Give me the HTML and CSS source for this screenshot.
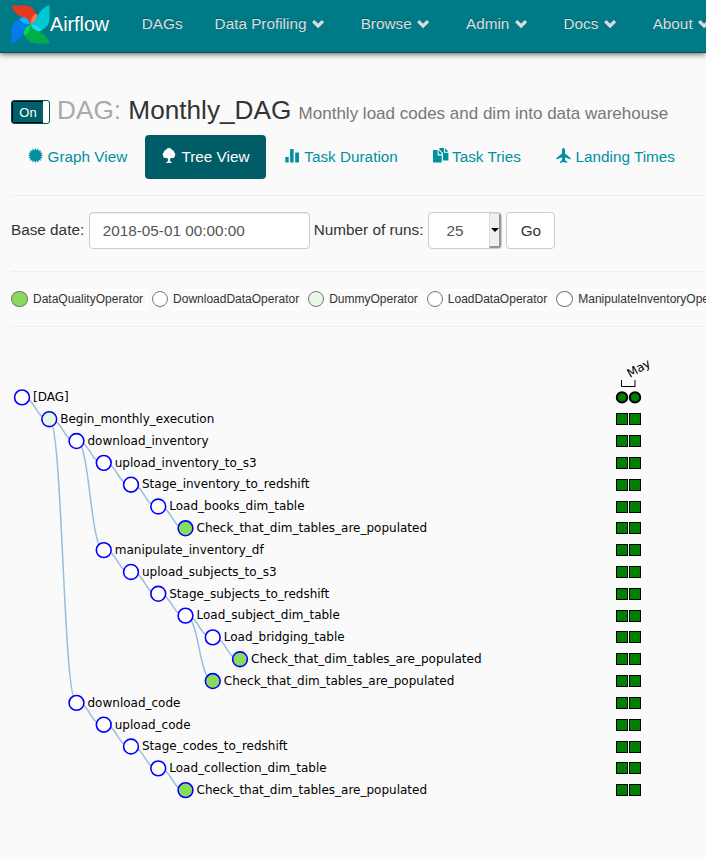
FILE: index.html
```
<!DOCTYPE html>
<html lang="en">
<head>
<meta charset="utf-8">
<title>Airflow - Monthly_DAG</title>
<link rel="stylesheet" href="styles.css">
</head>
<body>
<header class="navbar">
  <a class="brand"><svg class="logo" viewBox="-58 -58 116 116">
    <g><path fill="#e43921" d="M-58-57C-32-53-4-66 12-41L19-30C8-29 3-22 0 0C-6-24-42-14-58-57Z"/><path fill="#ff7557" d="M18-32C25-18 22-9 0 0C1-18 6-29 18-32Z"/></g>
    <g transform="rotate(90)"><path fill="#00c7d4" d="M-58-57C-32-53-4-66 12-41L19-30C8-29 3-22 0 0C-6-24-42-14-58-57Z"/><path fill="#11e1ee" d="M18-32C25-18 22-9 0 0C1-18 6-29 18-32Z"/></g>
    <g transform="rotate(180)"><path fill="#00ad46" d="M-58-57C-32-53-4-66 12-41L19-30C8-29 3-22 0 0C-6-24-42-14-58-57Z"/><path fill="#04d659" d="M18-32C25-18 22-9 0 0C1-18 6-29 18-32Z"/></g>
    <g transform="rotate(270)"><path fill="#017cee" d="M-58-57C-32-53-4-66 12-41L19-30C8-29 3-22 0 0C-6-24-42-14-58-57Z"/><path fill="#0cb6ff" d="M18-32C25-18 22-9 0 0C1-18 6-29 18-32Z"/></g>
  </svg><span>Airflow</span></a>
  <nav class="menu">
    <a>DAGs</a>
    <a>Data Profiling <svg class="chev" viewBox="0 0 15 15"><path d="M2.2 5.2L7.1 10L12 5.2"/></svg></a>
    <a>Browse <svg class="chev" viewBox="0 0 15 15"><path d="M2.2 5.2L7.1 10L12 5.2"/></svg></a>
    <a>Admin <svg class="chev" viewBox="0 0 15 15"><path d="M2.2 5.2L7.1 10L12 5.2"/></svg></a>
    <a>Docs <svg class="chev" viewBox="0 0 15 15"><path d="M2.2 5.2L7.1 10L12 5.2"/></svg></a>
    <a>About <svg class="chev" viewBox="0 0 15 15"><path d="M2.2 5.2L7.1 10L12 5.2"/></svg></a>
  </nav>
</header>
<main class="container">
  <div class="title">
    <span class="toggle"><span class="toggle-on">On</span><span class="toggle-handle"></span></span>
    <h3><span class="muted">DAG:</span> <span class="name">Monthly_DAG</span> <small>Monthly load codes and dim into data warehouse</small></h3>
  </div>
  <nav class="pills">
    <a><svg class="icon" viewBox="0 0 15 15"><path d="M7.5 0L8.6 2.2L10.4.6L10.7 3L13 2.2L12.3 4.5L14.6 4.7L13 6.4L15 7.5L13 8.6L14.6 10.3L12.3 10.5L13 12.8L10.7 12L10.4 14.4L8.6 12.8L7.5 15L6.4 12.8L4.6 14.4L4.3 12L2 12.8L2.7 10.5L.4 10.3L2 8.6L0 7.5L2 6.4L.4 4.7L2.7 4.5L2 2.2L4.3 3L4.6.6L6.4 2.2Z"/></svg> Graph View</a>
    <a class="active"><svg class="icon" viewBox="0 0 15 15"><path d="M7 0C8.5 0 9.7.8 10 2C11.4 2.1 12.4 3.3 12.1 4.6C13.4 5.2 13.6 6.6 12.8 7.7C13 9.3 11.4 10.5 9.8 9.8L8.1 10.7V13.5L9.6 14V15H4.4V14L5.9 13.5V10.7L4.2 9.8C2.6 10.5 1 9.3 1.2 7.7C.4 6.6.6 5.2 1.9 4.6C1.6 3.3 2.6 2.1 4 2C4.3.8 5.5 0 7 0Z"/></svg> Tree View</a>
    <a><svg class="icon" viewBox="0 0 15 15"><path d="M.3 9H3.7V14.5H.3ZM5.1 1.5Q5.1 1 5.6 1H8.1Q8.6 1 8.6 1.5V14.5H5.1ZM10.2 5Q10.2 4.5 10.7 4.5H13.5Q14 4.5 14 5V14.5H10.2Z"/></svg> Task Duration</a>
    <a><svg class="icon" viewBox="0 0 15 15"><path d="M0 2H4.6V7.4H8.7V14.6H0ZM5.6 2L9 5.4V6.3H5.6ZM6.4 0H11V4.8H15.4V12.5H10V5L6.4 1.4ZM12 0L15.4 3.8H12Z"/></svg> Task Tries</a>
    <a><svg class="icon" viewBox="0 0 15 15"><path d="M7.5 0C8.5 0 9 1.3 9 2.5V5.6L14.5 10V11.6L9 9.3V12L11.2 14V15L7.5 14.1L3.8 15V14L6 12V9.3L.5 11.6V10L6 5.6V2.5C6 1.3 6.5 0 7.5 0Z"/></svg> Landing Times</a>
  </nav>
  <form class="filters">
    <label>Base date:</label>
    <input class="date" type="text" value="2018-05-01 00:00:00">
    <label>Number of runs:</label>
    <span class="select"><span class="value">25</span><span class="drop"></span></span>
    <button class="go" type="button">Go</button>
  </form>
  <div class="legend">
    <div class="op"><i class="dot quality"></i><span>DataQualityOperator</span></div>
    <div class="op"><i class="dot"></i><span>DownloadDataOperator</span></div>
    <div class="op"><i class="dot dummy"></i><span>DummyOperator</span></div>
    <div class="op"><i class="dot"></i><span>LoadDataOperator</span></div>
    <div class="op"><i class="dot last"></i><span>ManipulateInventoryOperator</span></div>
  </div>
  <svg id="tree" class="tree" width="695" height="500"></svg>
</main>
<script src="tree.js"></script>
</body>
</html>
```
FILE: styles.css
```
* { box-sizing: border-box; }
body {
  margin: 0;
  background: #fafafa;
  color: #333;
  font: 15.3px/21px "Liberation Sans", Arial, sans-serif;
  overflow: hidden;
}
.navbar {
  display: flex;
  height: 53px;
  padding-left: 11px;
  background: #007a87;
  border-bottom: 1px solid #004f57;
  box-shadow: 0 1px 6px rgba(0, 0, 0, .65);
  white-space: nowrap;
  color: #dcdcdc;
}
.brand {
  display: flex;
  width: 114.8px;
  flex: none;
  padding-top: 5px;
  color: #fff;
  font-size: 19.7px;
  line-height: 38px;
  text-shadow: 0 -1px 0 rgba(0, 0, 0, .25);
}
.logo { width: 39px; height: 39px; flex: none; }
.menu { display: flex; padding-top: 13px; text-shadow: 0 -1px 0 rgba(0, 0, 0, .25); }
.menu a { padding: 0 16px; flex: none; }
.chev { width: 15px; height: 15px; margin-right: 3px; vertical-align: -2px; }
.chev path { fill: none; stroke: #dcdcdc; stroke-width: 3.2; }
.container { padding-left: 11px; }
.title { display: flex; height: 82px; padding-top: 41px; }
.toggle {
  display: flex;
  width: 39px;
  height: 24px;
  margin-top: 6px;
  border: 1px solid #004f57;
  border-radius: 3px;
  background: #fff;
  overflow: hidden;
}
.toggle-on {
  width: 31px;
  background: #005f69;
  border: 1px solid #000;
  border-right: 0;
  color: #fff;
  font-size: 13px;
  line-height: 22px;
  text-align: center;
}
h3 { margin: 0 0 0 7px; font-size: 26.2px; line-height: 32px; font-weight: 400; white-space: nowrap; }
.muted { color: #aaa; }
small { font-size: 17px; color: #777; }
.pills { display: flex; gap: 2px; height: 44px; white-space: nowrap; }
.pills a { padding: 11px 16px 11px 17px; border-radius: 4px; color: #0090a0; }
.pills .active { padding-right: 16.5px; background: #005c66; color: #fff; }
.icon { width: 15px; height: 15px; margin-right: .3px; fill: currentColor; vertical-align: -1px; overflow: visible; }
.filters {
  display: flex;
  gap: 4px;
  height: 77px;
  margin-top: 16px;
  padding-top: 16px;
  border-top: 1px solid #eee;
  border-bottom: 1px solid #eee;
  line-height: 36px;
  white-space: nowrap;
}
.date {
  width: 221px;
  height: 37px;
  margin-left: .6px;
  padding: 0 13px;
  border: 1px solid #ccc;
  border-radius: 4px;
  background: #fff;
  box-shadow: inset 0 1px 1px rgba(0, 0, 0, .075);
  color: #555;
  font: inherit;
}
.select {
  display: flex;
  justify-content: space-between;
  width: 74px;
  height: 37px;
  margin-left: 1px;
  border: 1px solid #ccc;
  border-radius: 4px;
  background: #fff;
  color: #555;
  overflow: hidden;
}
.value { padding-left: 17px; }
.drop {
  display: flex;
  align-items: center;
  justify-content: center;
  width: 12px;
  background: #f0f0ee;
  border: solid #dcdad5;
  border-width: 1px 2px 2px 1px;
  border-right-color: #999590;
  border-bottom-color: #999590;
}
.drop::before { content: ""; border: solid transparent; border-width: 4px 4px 0; border-top-color: #000; }
.go {
  width: 49px;
  height: 37px;
  padding: 0;
  border: 1px solid #ccc;
  border-radius: 4px;
  background: #fff;
  color: #333;
  font: inherit;
}
.legend {
  display: flex;
  gap: 4px;
  height: 55px;
  padding-top: 17px;
  border-bottom: 1px solid #eee;
  font-size: 12px;
  line-height: 17px;
  white-space: nowrap;
}
.op { display: flex; flex: none; }
.dot { width: 16px; height: 16px; margin-top: 2px; border: 1px solid #777; border-radius: 50%; background: #fff; }
.quality, .last { width: 17px; }
.quality { background: #8adb5a; }
.dummy { background: #e8f7e4; }
.op span { height: 21px; padding: 0 3px; border: 2px solid #fff; border-radius: 5px; }
.tree { display: block; margin-top: 23px; font: 12px "DejaVu Sans", sans-serif; }
.link { fill: none; stroke: #95bfdf; stroke-width: 1.5; }
.node { fill: #fff; stroke: #00f; stroke-width: 1.6; }
.node.quality { fill: #8adb5a; }
.node.dummy { fill: #e8f7e4; }
.run { fill: green; stroke: #000; stroke-width: 2; }
.task { fill: green; stroke: #000; stroke-width: 1; }
.axis { fill: none; stroke: #000; }
```
FILE: tree.js
```
// Each row: label, depth, parent row index, operator class
const rows = [
  ["[DAG]", 0, null, ""],
  ["Begin_monthly_execution", 1, 0, "dummy"],
  ["download_inventory", 2, 1, ""],
  ["upload_inventory_to_s3", 3, 2, ""],
  ["Stage_inventory_to_redshift", 4, 3, ""],
  ["Load_books_dim_table", 5, 4, ""],
  ["Check_that_dim_tables_are_populated", 6, 5, "quality"],
  ["manipulate_inventory_df", 3, 2, ""],
  ["upload_subjects_to_s3", 4, 7, ""],
  ["Stage_subjects_to_redshift", 5, 8, ""],
  ["Load_subject_dim_table", 6, 9, ""],
  ["Load_bridging_table", 7, 10, ""],
  ["Check_that_dim_tables_are_populated", 8, 11, "quality"],
  ["Check_that_dim_tables_are_populated", 7, 10, "quality"],
  ["download_code", 2, 1, ""],
  ["upload_code", 3, 14, ""],
  ["Stage_codes_to_redshift", 4, 15, ""],
  ["Load_collection_dim_table", 5, 16, ""],
  ["Check_that_dim_tables_are_populated", 6, 17, "quality"]
];
const x = i => 11 + rows[i][1] * 27.25;
const y = i => 47.4 + i * 21.82;
let links = "", nodes = "";
rows.forEach(([label, , parent, kind], i) => {
  if (parent !== null) {
    const mid = (x(i) + x(parent)) / 2;
    links += `<path class="link" d="M${x(parent)} ${y(parent)}C${mid} ${y(parent)} ${mid} ${y(i)} ${x(i)} ${y(i)}"/>`;
  }
  nodes += `<circle class="node ${kind}" cx="${x(i)}" cy="${y(i)}" r="7.4"/>` +
    `<text x="${x(i) + 11}" y="${y(i) + 3.8}">${label}</text>`;
  const top = Math.round(y(i) - 6) + 0.5;
  nodes += [611, 624].map(cx => i === 0
    ? `<circle class="run" cx="${cx}" cy="${y(i)}" r="5.2"/>`
    : `<rect class="task" x="${cx - 5.5}" y="${top}" width="11" height="11"/>`).join("");
});
document.getElementById("tree").innerHTML = links + nodes +
  '<path class="axis" d="M610.5 30V36.5H624M624 30V37"/>' +
  '<text transform="translate(619 28) rotate(-30)">May</text>';
```
